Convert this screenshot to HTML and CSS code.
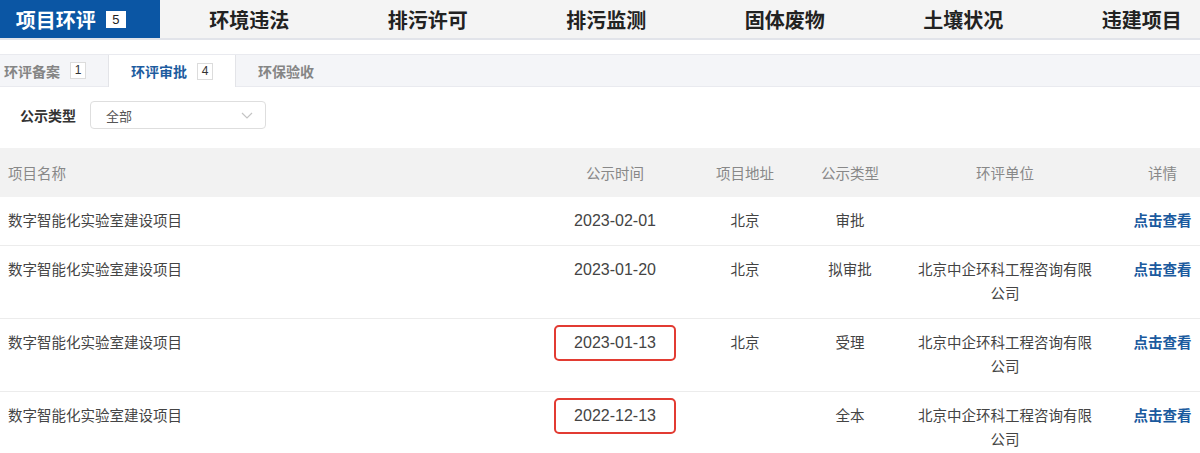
FILE: index.html
```html
<!DOCTYPE html>
<html lang="zh-CN">
<head>
  <meta charset="UTF-8">
  <meta name="viewport" content="width=device-width, initial-scale=1.0">
  <title>项目环评</title>
  <link rel="stylesheet" href="styles.css">
</head>
<body>
  <div class="nav">
    <div class="nav-tab active">项目环评 <span class="nav-badge">5</span></div>
    <div class="nav-tab">环境违法</div>
    <div class="nav-tab">排污许可</div>
    <div class="nav-tab">排污监测</div>
    <div class="nav-tab">固体废物</div>
    <div class="nav-tab">土壤状况</div>
    <div class="nav-tab">违建项目</div>
  </div>

  <div class="subtabs">
    <div class="subtab">环评备案 <span class="sub-badge">1</span></div>
    <div class="subtab active">环评审批 <span class="sub-badge">4</span></div>
    <div class="subtab">环保验收</div>
  </div>

  <div class="filter">
    <span class="filter-label">公示类型</span>
    <div class="select">
      <span>全部</span>
      <svg class="chevron" width="12" height="7" viewBox="0 0 12 7"><path d="M1 1l5 5 5-5" fill="none" stroke="#c4c4c4" stroke-width="1.2"/></svg>
    </div>
  </div>

  <table class="list">
    <thead>
      <tr>
        <th class="col-name">项目名称</th>
        <th class="col-date">公示时间</th>
        <th class="col-addr">项目地址</th>
        <th class="col-type">公示类型</th>
        <th class="col-org">环评单位</th>
        <th class="col-more">详情</th>
      </tr>
    </thead>
    <tbody>
      <tr>
        <td class="col-name">数字智能化实验室建设项目</td>
        <td class="col-date">2023-02-01</td>
        <td class="col-addr">北京</td>
        <td class="col-type">审批</td>
        <td class="col-org"></td>
        <td class="col-more"><a href="#">点击查看</a></td>
      </tr>
      <tr>
        <td class="col-name">数字智能化实验室建设项目</td>
        <td class="col-date">2023-01-20</td>
        <td class="col-addr">北京</td>
        <td class="col-type">拟审批</td>
        <td class="col-org">北京中企环科工程咨询有限公司</td>
        <td class="col-more"><a href="#">点击查看</a></td>
      </tr>
      <tr>
        <td class="col-name">数字智能化实验室建设项目</td>
        <td class="col-date"><span class="mark">2023-01-13</span></td>
        <td class="col-addr">北京</td>
        <td class="col-type">受理</td>
        <td class="col-org">北京中企环科工程咨询有限公司</td>
        <td class="col-more"><a href="#">点击查看</a></td>
      </tr>
      <tr>
        <td class="col-name">数字智能化实验室建设项目</td>
        <td class="col-date"><span class="mark">2022-12-13</span></td>
        <td class="col-addr"></td>
        <td class="col-type">全本</td>
        <td class="col-org">北京中企环科工程咨询有限公司</td>
        <td class="col-more"><a href="#">点击查看</a></td>
      </tr>
    </tbody>
  </table>
</body>
</html>
```

FILE: styles.css
```css
body {
  margin: 0;
  background-color: white;
  color: #444;
  font-family: "Liberation Sans", "Noto Sans CJK SC", sans-serif;
  overflow: hidden;
}

.nav {
  display: flex;
  margin-left: -18.5px;
  height: 38px;
  background-color: #f4f4f4;
  border-bottom: 2px solid #e2e4ea;
}

.nav-tab {
  flex: 0 0 178.5px;
  display: flex;
  align-items: center;
  justify-content: center;
  gap: 10px;
  font-size: 20px;
  font-weight: bold;
  color: #222;
}

.nav-tab.active {
  background-color: #0b56a4;
  color: white;
}

.nav-badge {
  display: inline-block;
  width: 20px;
  height: 17px;
  line-height: 17px;
  background-color: white;
  color: #222;
  font-size: 13px;
  font-weight: normal;
  text-align: center;
}

.subtabs {
  display: flex;
  margin: 14px 0 0 -18px;
  height: 31px;
  background-color: #f4f5f8;
  border-top: 1px solid #e9eaef;
  border-bottom: 1px solid #e9eaef;
}

.subtab {
  display: flex;
  align-items: center;
  gap: 10px;
  padding: 0 22px;
  font-size: 14px;
  font-weight: bold;
  color: #858585;
}

.subtab.active {
  background-color: white;
  color: #1d5c9f;
  border-left: 1px solid #e3e4e8;
  border-right: 1px solid #e3e4e8;
  margin-bottom: -1px;
}

.sub-badge {
  display: inline-block;
  width: 14px;
  height: 15px;
  line-height: 15px;
  border: 1px solid #dcdcdc;
  background-color: white;
  color: #333;
  font-size: 12px;
  font-weight: normal;
  text-align: center;
}

.filter {
  display: flex;
  align-items: center;
  gap: 14px;
  padding: 14px 20px 0;
}

.filter-label {
  font-size: 14px;
  font-weight: bold;
  color: #333;
}

.select {
  display: flex;
  align-items: center;
  justify-content: space-between;
  box-sizing: border-box;
  width: 176px;
  height: 28px;
  padding: 0 12px 0 15px;
  border: 1px solid #dedede;
  border-radius: 4px;
  font-size: 13px;
  color: #555;
}

.list {
  width: 1200px;
  margin-top: 19px;
  border-collapse: collapse;
  table-layout: fixed;
  font-size: 14.5px;
}

.list th {
  height: 49px;
  padding: 0 8px;
  background-color: #f2f2f2;
  color: #888;
  font-weight: normal;
}

.list td {
  padding: 12px 8px;
  line-height: 24px;
  vertical-align: top;
  border-bottom: 1px solid #ececec;
  color: #444;
}

.col-name { width: 529px; text-align: left; }
.col-date { width: 124px; text-align: center; }
.col-addr { width: 104px; text-align: center; }
.col-type { width: 74px; text-align: center; }
.col-org { width: 182px; text-align: center; }
.list .col-org { padding-left: 19px; padding-right: 19px; }
.col-more { text-align: center; }
.list .col-more { padding-left: 10px; padding-right: 0; }

.list td.col-date {
  font-size: 16px;
}

.col-more a {
  color: #1b5a9e;
  font-weight: bold;
  text-decoration: none;
}

.mark {
  display: inline-block;
  margin: -6px -20px;
  padding: 4px 18px;
  line-height: 24px;
  border: 2px solid #e23b32;
  border-radius: 5px;
}
```
